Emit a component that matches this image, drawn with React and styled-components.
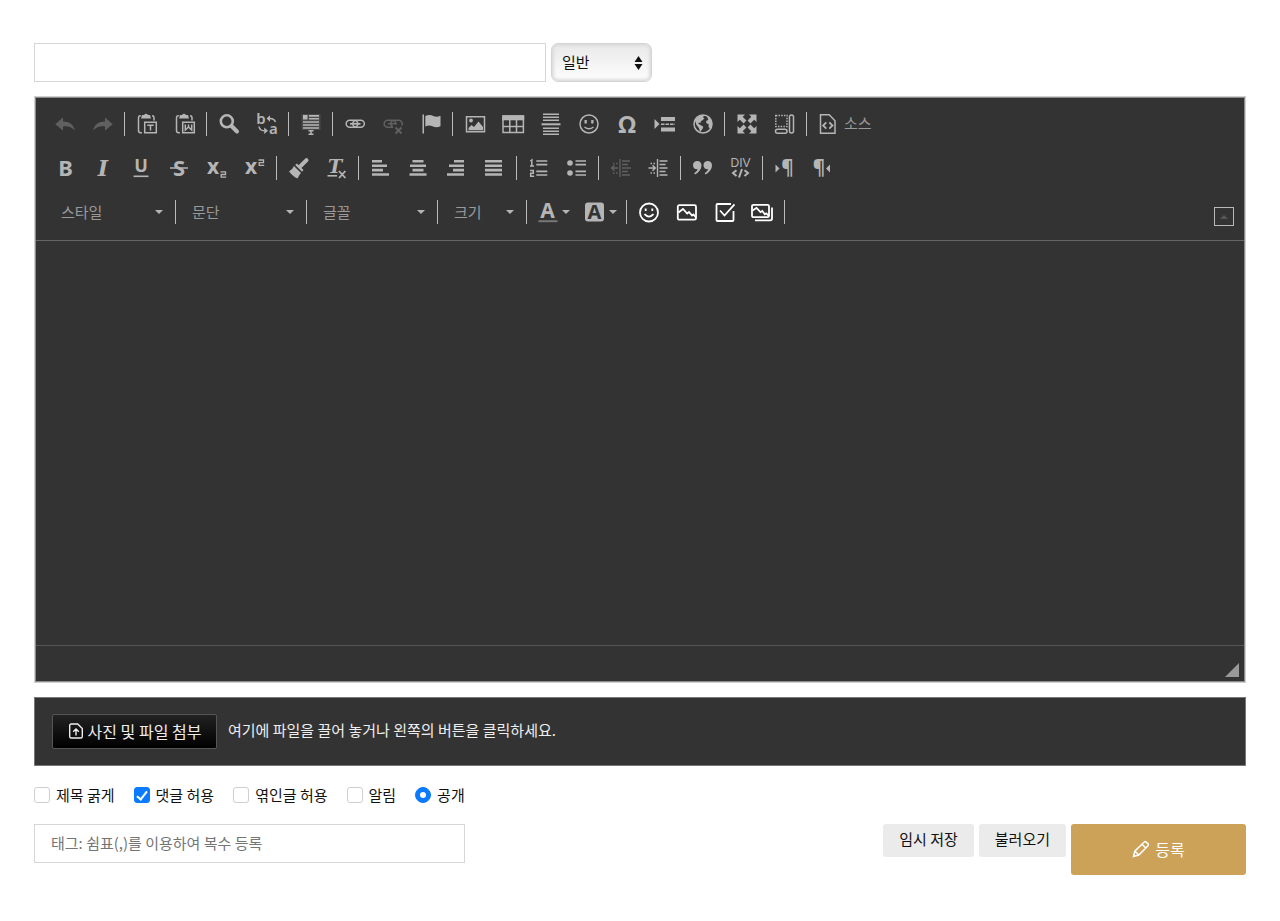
import React from "react";
import styled, { createGlobalStyle, css } from "styled-components";

const GlobalStyle = createGlobalStyle`
  *, *::before, *::after { box-sizing: border-box; }
  body {
    margin: 0;
    background: #fff;
    color: #111;
    font: 15px/24px "Noto Sans CJK KR", "Noto Sans", sans-serif;
  }
  button, input, select { font: inherit; color: inherit; margin: 0; }
`;

const line = "#d6d6d6";

const Form = styled.form`
  padding: 43px 34px 46px;
`;

const TitleRow = styled.div`
  display: flex;
  gap: 5px;
  height: 39px;
  margin-bottom: 14px;
`;

const TextInput = styled.input`
  width: ${(p) => p.$width};
  height: 39px;
  padding: 0 16px 2px;
  border: 1px solid ${line};
  background: #fff;
  outline: 0;
  &::placeholder { color: #757575; opacity: 1; }
`;

const SelectBox = styled.div`
  display: flex;
  align-items: center;
  width: 101px;
  padding-right: 8px;
  border: 1px solid #d4d4d4;
  border-radius: 7px;
  background: linear-gradient(#e9e9e9, #fdfdfd);
  box-shadow: inset 0 0 3px 2px #dcdcdc;
`;

const Select = styled.select`
  flex: 1;
  min-width: 0;
  height: 100%;
  padding: 0 0 2px 10px;
  border: 0;
  background: transparent;
  appearance: none;
  outline: 0;
`;

const Editor = styled.section`
  padding: 1px;
  border: 1px solid #d0d0d0;
  box-shadow: inset 0 0 0 1px #8c8c8c;
  background: #333;
  color: #b3b3b3;
  margin-bottom: 14px;
`;

const Toolbar = styled.div`
  display: flex;
  align-items: flex-end;
  justify-content: space-between;
  padding: 4px 10px 6px;
  border-bottom: 1px solid #666;
`;

const ToolRow = styled.div`
  display: flex;
  align-items: center;
  height: 44px;
  padding-left: ${(p) => (p.$combos ? 2 : 0)}px;
`;

const bare = css`
  padding: 0;
  border: 0;
  background: transparent;
  color: inherit;
`;

const ToolButton = styled.button`
  ${bare}
  display: flex;
  align-items: center;
  justify-content: center;
  gap: 3px;
  flex: none;
  min-width: 38px;
  height: 36px;
  padding: 0 7px;
  color: ${(p) => (p.$bright ? "#fff" : "#b5b5b5")};
  opacity: ${(p) => (p.disabled ? 0.35 : 1)};
`;

const ToolText = styled.span`
  padding-bottom: 2px;
  color: #999;
`;

const Separator = styled.span`
  width: 1px;
  height: 24px;
  margin: 0 3px 0 2px;
  background: #bbb;
`;

const Combo = styled.button`
  ${bare}
  display: flex;
  align-items: center;
  justify-content: space-between;
  width: ${(p) => p.$width}px;
  height: 36px;
  padding: 0 10px 0 13px;
  color: #999;
`;

const ColorButton = styled.button`
  ${bare}
  display: flex;
  align-items: center;
  justify-content: flex-end;
  gap: 2px;
  width: 47px;
  height: 36px;
  padding-right: 7px;
  color: #b5b5b5;
`;

const Caret = styled.span`
  border: 4px solid transparent;
  border-top-color: #b5b5b5;
  border-bottom: 0;
`;

const CollapseButton = styled.button`
  ${bare}
  display: grid;
  place-items: center;
  width: 20px;
  height: 19px;
  margin-bottom: 8px;
  border: 1px solid #b8b8b8;
  &::after {
    content: "";
    border: 4px solid transparent;
    border-bottom-color: #555;
    border-top: 0;
  }
`;

const EditArea = styled.div`
  height: 405px;
  border-bottom: 1px solid #555;
  outline: 0;
`;

const EditorFooter = styled.div`
  display: flex;
  align-items: flex-end;
  justify-content: flex-end;
  height: 35px;
  padding: 4px 5px;
`;

const ResizeGrip = styled.span`
  border: 7px solid #999;
  border-top-color: transparent;
  border-left-color: transparent;
`;

const UploadBox = styled.section`
  display: flex;
  align-items: center;
  gap: 11px;
  height: 69px;
  padding: 0 17px;
  margin-bottom: 17px;
  border: 1px solid #777;
  background: #333;
  color: #eee;
`;

const UploadHint = styled.span`
  padding-bottom: 3px;
`;

const AttachButton = styled.button`
  ${bare}
  display: flex;
  align-items: center;
  justify-content: center;
  gap: 4px;
  width: 165px;
  height: 35px;
  padding-bottom: 2px;
  border: 1px solid #555;
  border-radius: 2px;
  background: linear-gradient(#222, #000);
  font-size: 16px;
`;

const Options = styled.div`
  display: flex;
  align-items: center;
  gap: 19px;
  margin-bottom: 17px;
`;

const OptionLabel = styled.label`
  display: flex;
  align-items: center;
  gap: 6px;
`;

const Check = styled.input`
  appearance: none;
  display: grid;
  place-items: center;
  width: 16px;
  height: 16px;
  border: 1px solid #cfcfcf;
  border-radius: ${(p) => (p.type === "radio" ? "50%" : "3px")};
  background: #fff;
  &:checked { background: #0a7aff; border-color: #0a7aff; }
  &[type="checkbox"]:checked::after {
    content: "";
    width: 6px;
    height: 11px;
    border: solid #fff;
    border-width: 0 2px 2px 0;
    transform: translateY(-1px) rotate(38deg);
  }
  &[type="radio"]:checked::after {
    content: "";
    width: 6px;
    height: 6px;
    border-radius: 50%;
    background: #fff;
  }
`;

const BottomRow = styled.div`
  display: flex;
  align-items: flex-start;
  justify-content: space-between;
`;

const Actions = styled.div`
  display: flex;
  align-items: flex-start;
  gap: 5px;
`;

const GrayButton = styled.button`
  ${bare}
  height: 33px;
  padding: 0 16px 3px;
  border-radius: 3px;
  background: #ebebeb;
`;

const SubmitButton = styled.button`
  ${bare}
  display: flex;
  align-items: center;
  justify-content: center;
  gap: 5px;
  width: 175px;
  height: 51px;
  padding-bottom: 2px;
  border-radius: 3px;
  background: #cba258;
  color: #fff;
  font-size: 16px;
`;

const Glyph = styled.svg`
  display: block;
  flex: none;
  overflow: visible;
`;

const Letter = styled.text`
  fill: ${(p) => p.$fill || "currentColor"};
  stroke: none;
  text-anchor: middle;
  font: ${(p) => p.$style || "bold"} ${(p) => p.$size}px ${(p) => p.$family || '"Noto Sans"'}, sans-serif;
`;

function Svg({ children, size = 24, width = 1.5 }) {
  return (
    <Glyph
      width={size}
      height={size}
      viewBox={`0 0 ${size} ${size}`}
      fill="none"
      stroke="currentColor"
      strokeWidth={width}
      aria-hidden="true"
    >
      {children}
    </Glyph>
  );
}

const solid = { fill: "currentColor", stroke: "none" };
const serif = { $family: '"DejaVu Serif"', $style: "italic bold" };

const clipboard = (
  <>
    <path d="M5.8 3.8H5.3Q3.5 3.8 3.500 6v12.500q0 2.200 2 2.200h1.400M17 3.800q2 0 2 2.200v2.500" />
    <path {...solid} d="M7 3h2q2-2.400 4 0h2l1 3.600H6z" />
    <path d="M9.700 10.200h11.600v10.600H9.700z" />
  </>
);

const arrowUndo = "M2.3 12.3 10 5.5v4.1c6.5.2 10.5 2.8 11.8 9.2-3.2-4-6.5-4.7-11.8-4.4v4.2z";

const alignIcon = (rows) => (
  <path
    {...solid}
    d={rows.map(([x, w], i) => `M${x} ${4 + i * 4.4}h${w}v2.6h-${w}z`).join("")}
  />
);

const icons = {
  undo: <path {...solid} d={arrowUndo} />,
  redo: <path {...solid} d={arrowUndo} transform="matrix(-1 0 0 1 24 0)" />,
  pasteText: (
    <>
      {clipboard}
      <path d="M12.3 13.2h6.4M15.5 13.2v5.3" />
    </>
  ),
  pasteWord: (
    <>
      {clipboard}
      <path d="M12.3 12.5v5.5l3.2-3 3.2 3v-5.5M15.5 12.500v3" />
    </>
  ),
  find: (
    <>
      <circle cx="9.8" cy="9.3" r="6" strokeWidth="2.6" />
      <path d="m14.5 14 5.500 5.500" strokeWidth="4" strokeLinecap="round" />
    </>
  ),
  replace: (
    <>
      <Letter $size="15" $style="600" x="6" y="12">b</Letter>
      <Letter $size="15" $style="600" x="18.500" y="22">a</Letter>
      <path d="M14 6.5c3.5-.3 5.5.8 6.500 3.500M4 14.500c.5 3 2.500 4.300 5.500 4.300" />
      <path {...solid} d="M11.500 6.500 15 3.200v6.600zM13 18.800 9.200 15.500v6.600z" />
    </>
  ),
  selectAll: (
    <>
      <path fill="#4a4a4a" stroke="none" d="M2.5 2h19v16h-19z" />
      <path {...solid} d="M4 3h4.500v4.500H4zM10 3h10v1.700H10zM10 6h10v1.500H10zM4 9.200h16v1.500H4zM4 12.200h16v1.500H4zM4 15.200h16v1.500H4z" />
      <path d="M9.5 18.7h5M9.500 22.300h5M12 18.500v4" />
    </>
  ),
  link: (
    <>
      <rect x="3.200" y="8.300" width="11.500" height="7" rx="3.500" />
      <rect x="9.800" y="8.300" width="11.500" height="7" rx="3.500" />
      <path d="M7 11.800h10.500" strokeWidth="1.800" />
    </>
  ),
  unlink: (
    <>
      <path d="M12 15.300H6.700a3.500 3.500 0 0 1 0-7h4.500a3.500 3.500 0 0 1 3.500 3.500M20.800 13.500A3.500 3.500 0 0 0 17.800 8.300h-4.500A3.500 3.500 0 0 0 9.800 11.800q0 2 2 3M7 11.800h9" />
      <path d="m14.500 15.500 6 6m0-6-6 6" strokeWidth="2" />
    </>
  ),
  flag: (
    <path {...solid} d="M3.5 2.500h1.500V21.500H3.500zM6.300 4c3-1.500 5.500-1.300 8 0 2.200 1.100 4.500 1 7.200-.2v10.500c-3 1.300-5.500 1.200-8 0-2.500-1.100-4.500-1-7.200.2z" />
  ),
  image: (
    <>
      <path d="M3.500 4.700h18v15h-18z" />
      <circle {...solid} cx="8" cy="8.500" r="1.900" />
      <path {...solid} d="m5.500 18.300v-2.300l3-3 2.500 2 4.500-5.500 4.500 5.500v3.300z" />
    </>
  ),
  table: (
    <>
      <path d="M2 4h20.400v16.500H2zM2 14.500h20.400M8.800 8v12.500M15.500 8v12.500" />
      <path {...solid} d="M1.300 3.300h21.900v5H1.300z" />
    </>
  ),
  rule: (
    <>
      <path d="M4 2.300h16M4 5.300h16M4 8.300h16M4 16.200h16M4 19.200h16M4 22.200h16" strokeWidth="1.400" />
      <path d="M2.500 12.300h19" strokeWidth="2" />
    </>
  ),
  smiley: (
    <>
      <circle cx="12" cy="12" r="9" />
      <path {...solid} d="M7.500 8h2.300v3.500H7.500zM14.200 8h2.300v3.500h-2.300z" />
      <path d="M7.500 15q4.500 3.500 9 0" />
    </>
  ),
  omega: <Letter $size="24" x="12" y="20.500">Ω</Letter>,
  pageBreak: (
    <>
      <path {...solid} d="M1.500 7v10l5-5zM8 5h14v4H8zM8 15.500h14v4H8z" />
      <path d="M8 12.200h14" strokeDasharray="3.5 1" />
    </>
  ),
  globe: (
    <>
      <circle cx="12" cy="12" r="9" />
      <path {...solid} d="M4 8.500 7 4.500 11 3.300h2.200L12 5.500l1.500.8L11.800 8 10 9.200 9.300 11l-1.500-.6-.5 1.300L9.500 13l2.800 1.700-.8 2.300-2.500 3-1-3.800L5.500 13zM16 4.300l3.800 3.200 1.400 4.500-.7 3.500-1.500 1-1.500-1.500.3-2.500L15 10.800l.5-2 1.800-1z" />
    </>
  ),
  maximize: (
    <>
      <path d="m5 5 5 5M19 5l-5 5M5 19l5-5M19 19l-5-5" strokeWidth="4" />
      <path {...solid} d="M2.500 2.500H10l-7.500 7.500zM21.500 2.500H14l7.500 7.500zM2.500 21.500H10l-7.500-7.500zM21.500 21.500H14l7.500-7.500z" />
    </>
  ),
  showBlocks: (
    <>
      <path d="M2.800 3.500h11.200v11H2.800z" strokeDasharray="1.500 1.200" />
      <rect x="16.500" y="3" width="4" height="18" rx="2" />
      <rect x="2.500" y="17.200" width="11.500" height="4" rx="2" />
    </>
  ),
  source: (
    <>
      <path d="M3.500 2.700h8.700l5.800 6v12.600H3.500z" />
      <path d="m9.300 10.300-3.200 3.200 3.200 3.200M12.300 10.300l3.200 3.200-3.200 3.200" strokeWidth="1.800" />
    </>
  ),
  bold: <Letter $size="22" x="12.500" y="20">B</Letter>,
  italic: <Letter {...serif} $size="22" x="12" y="20">I</Letter>,
  underline: (
    <>
      <Letter $size="18" x="12" y="16">U</Letter>
      <path d="M4.500 20.300h15" strokeWidth="1.600" />
    </>
  ),
  strike: (
    <>
      <Letter $size="22" x="12" y="20">S</Letter>
      <path d="M3 12h18" />
    </>
  ),
  sub: (
    <>
      <Letter $size="21" x="8" y="18">x</Letter>
      <path d="M15.500 15.800h5v2.700h-4.300v2.700h5" strokeWidth="1.300" />
    </>
  ),
  sup: (
    <>
      <Letter $size="21" x="8" y="18">x</Letter>
      <path d="M15.500 4h5v2.700h-4.300v2.700h5" strokeWidth="1.300" />
    </>
  ),
  brush: (
    <>
      <path d="m19.500 4.200-6 6" strokeWidth="4" strokeLinecap="round" />
      <path {...solid} d="m10 7.500 6.500 6.500-1.500 1.800L8.200 9zM7 10l7 7q-2 2-3.500 5.500-4-1.500-8.500-7 3.500-2 5-5.500z" />
    </>
  ),
  removeFormat: (
    <>
      <Letter {...serif} $size="19" x="10" y="17">T</Letter>
      <path d="M2.500 19.800h9.500" strokeWidth="1.600" />
      <path d="m14 15 6.400 7M20.400 15l-6.400 7" strokeWidth="1.800" />
    </>
  ),
  left: alignIcon([[3, 10], [3, 15], [3, 11], [3, 17]]),
  center: alignIcon([[5.5, 11], [3, 16], [5.5, 11], [2.5, 17]]),
  right: alignIcon([[9, 10], [4, 15], [8, 11], [2, 17]]),
  justify: alignIcon([[2, 17], [2, 17], [2, 17], [2, 17]]),
  ordered: (
    <>
      <path d="M9.300 5h11M9.300 8.600h11M9.300 15.300h11M9.300 19h11" strokeWidth="1.700" />
      <path d="M3.300 5l1.500-1V10M3 10h4M3 14.500h3.300v2.800H3.700v3h3.500" strokeWidth="1.500" />
    </>
  ),
  bullets: (
    <>
      <path d="M10.500 5h10.500M10.500 8.600h10.500M10.500 15.300h10.500M10.500 19h10.500" strokeWidth="1.700" />
      <circle {...solid} cx="5" cy="7" r="2.800" />
      <circle {...solid} cx="5" cy="17" r="2.800" />
    </>
  ),
  outdent: (
    <>
      <path d="M11 3v18M13 5h8M13 8.500h6M13 12h9M13 15.500h6M13 19h8M2 12h7M5.500 9.200 2.700 12l2.800 2.800" strokeWidth="1.300" />
      <path d="M4 7.500h5M4 17h5" strokeDasharray="1.5 1.5" />
    </>
  ),
  indent: (
    <>
      <path d="M10.500 3v18M12.500 5h8M12.500 8.500h6M12.500 12h8M12.500 15.500h6M12.500 19h8M1.500 12h7M5.500 9.200 8.300 12 5.500 14.800" strokeWidth="1.400" />
      <path d="M3.500 7.500h5M3.500 17h5" strokeDasharray="1.5 1.5" />
    </>
  ),
  quote: (
    <path {...solid} d="M2 9a4.200 4.200 0 0 1 8.500.3q0 5.600-6.500 9.200l-.8-1.300q3-2 3.500-4Q2 13.400 2 9zM12.500 9a4.200 4.200 0 0 1 8.500.3q0 5.600-6.500 9.200l-.8-1.300q3-2 3.500-4Q12.500 13.400 12.500 9z" />
  ),
  div: (
    <>
      <Letter $size="12" $style="500" $family='"Liberation Sans"' x="11.500" y="10.500">DIV</Letter>
      <path d="m7.500 14.200-3.500 2.900L7.500 20M15.500 14.200l3.500 2.900-3.500 2.900M13 13l-3 8.500" strokeWidth="2" />
    </>
  ),
  ltr: (
    <>
      <path {...solid} d="M2.500 8.500v8l4-4z" />
      <Letter $size="19" x="14.500" y="17.500">¶</Letter>
    </>
  ),
  rtl: (
    <>
      <path {...solid} d="M19 8.500v8l-4-4z" />
      <Letter $size="19" x="8" y="17.500">¶</Letter>
    </>
  ),
  textColor: (
    <>
      <Letter $size="21" x="11.500" y="18">A</Letter>
      <path d="M2.500 21.200h19" stroke="#777" strokeWidth="2" />
    </>
  ),
  bgColor: (
    <>
      <rect {...solid} x="2" y="2.500" width="19" height="19" rx="3" />
      <Letter $size="20" $fill="#333" x="11.500" y="19.300">A</Letter>
    </>
  ),
  emoticon: (
    <>
      <circle cx="12" cy="12.5" r="9" strokeWidth="1.800" />
      <path {...solid} d="M7.800 8.500h1.800V11H7.800zM14.400 8.500h1.800V11h-1.800z" />
      <path d="M7.500 14.200q4.500 4.800 9 0" strokeWidth="1.800" />
    </>
  ),
  photo: (
    <>
      <rect x="2.800" y="5.200" width="18.200" height="14.500" rx="1.500" strokeWidth="1.800" />
      <path d="m3.500 12.500 4.500-3.500 4.200 4.500 1.800-1.500 3 3.500 1.500-1 2.500 3" strokeWidth="1.800" />
    </>
  ),
  todo: (
    <>
      <path d="M20.500 11v9q0 1-1 1h-15q-1 0-1-1V5q0-1 1-1H18" strokeWidth="1.800" />
      <path d="m7 10.500 4.500 5L21.500 4.300" strokeWidth="1.800" />
    </>
  ),
  gallery: (
    <>
      <rect x="1" y="4.800" width="17" height="12.400" rx="1.500" strokeWidth="1.800" />
      <path d="M4 20.300h15.200q1.800 0 1.800-1.800V7.500" strokeWidth="1.800" />
      <path d="m1.500 10.500 4-2.500 4 4.200 1.800-1.200 2.500 3.300 1.500-1 2.500 2.500" strokeWidth="1.800" />
    </>
  ),
};

const rowOne = [
  [["undo", "취소", true], ["redo", "재실행", true]],
  [["pasteText", "텍스트로 붙여넣기"], ["pasteWord", "Word에서 붙여넣기"]],
  [["find", "찾기"], ["replace", "바꾸기"]],
  [["selectAll", "모두 선택"]],
  [["link", "링크"], ["unlink", "링크 삭제", true], ["flag", "책갈피"]],
  [
    ["image", "이미지"], ["table", "표"], ["rule", "가로 줄"], ["smiley", "이모티콘"],
    ["omega", "특수 문자"], ["pageBreak", "페이지 나누기"], ["globe", "아이프레임"],
  ],
  [["maximize", "최대화"], ["showBlocks", "블록 보기"]],
];

const rowTwo = [
  [
    ["bold", "굵게"], ["italic", "기울임"], ["underline", "밑줄"],
    ["strike", "취소선"], ["sub", "아래 첨자"], ["sup", "위 첨자"],
  ],
  [["brush", "서식 복사"], ["removeFormat", "서식 지우기"]],
  [["left", "왼쪽 정렬"], ["center", "가운데 정렬"], ["right", "오른쪽 정렬"], ["justify", "양쪽 맞춤"]],
  [["ordered", "순서 있는 목록"], ["bullets", "순서 없는 목록"]],
  [["outdent", "내어쓰기", true], ["indent", "들여쓰기"]],
  [["quote", "인용"], ["div", "DIV 컨테이너"]],
  [["ltr", "왼쪽에서 오른쪽"], ["rtl", "오른쪽에서 왼쪽"]],
];

const combos = [["스타일", 125], ["문단", 125], ["글꼴", 125], ["크기", 83]];
const extras = [["emoticon", "이모티콘 삽입"], ["photo", "사진"], ["todo", "할 일"], ["gallery", "갤러리"]];

function Tool({ name, label, disabled, bright }) {
  return (
    <ToolButton type="button" aria-label={label} disabled={disabled} $bright={bright}>
      <Svg>{icons[name]}</Svg>
    </ToolButton>
  );
}

function Groups({ groups }) {
  return groups.map((group, i) => (
    <React.Fragment key={i}>
      {i > 0 && <Separator />}
      {group.map(([name, label, disabled]) => (
        <Tool key={name} name={name} label={label} disabled={disabled} />
      ))}
    </React.Fragment>
  ));
}

function Option({ label, ...input }) {
  return (
    <OptionLabel>
      <Check {...input} />
      {label}
    </OptionLabel>
  );
}

export default function App() {
  return (
    <>
      <GlobalStyle />
      <Form onSubmit={(e) => e.preventDefault()}>
        <TitleRow>
          <TextInput $width="512px" type="text" aria-label="제목" />
          <SelectBox>
            <Select aria-label="분류" defaultValue="일반">
              <option>일반</option>
            </Select>
            <Glyph width="9" height="16" viewBox="0 0 9 16" fill="#111" aria-hidden="true">
              <path d="M4.500 1 8.500 7h-8zM4.500 15l-4-6h8z" />
            </Glyph>
          </SelectBox>
        </TitleRow>

        <Editor>
          <Toolbar>
            <div role="toolbar">
              <ToolRow>
                <Groups groups={rowOne} />
                <Separator />
                <ToolButton type="button">
                  <Svg>{icons.source}</Svg>
                  <ToolText>소스</ToolText>
                </ToolButton>
              </ToolRow>
              <ToolRow>
                <Groups groups={rowTwo} />
              </ToolRow>
              <ToolRow $combos>
                {combos.map(([label, width]) => (
                  <React.Fragment key={label}>
                    <Combo type="button" $width={width}>
                      {label}
                      <Caret />
                    </Combo>
                    <Separator />
                  </React.Fragment>
                ))}
                <ColorButton type="button" aria-label="글자 색상">
                  <Svg>{icons.textColor}</Svg>
                  <Caret />
                </ColorButton>
                <ColorButton type="button" aria-label="배경 색상">
                  <Svg>{icons.bgColor}</Svg>
                  <Caret />
                </ColorButton>
                <Separator />
                {extras.map(([name, label]) => (
                  <Tool key={name} name={name} label={label} bright />
                ))}
                <Separator />
              </ToolRow>
            </div>
            <CollapseButton type="button" aria-label="툴바 줄이기" />
          </Toolbar>
          <EditArea contentEditable suppressContentEditableWarning role="textbox" aria-label="내용" />
          <EditorFooter>
            <ResizeGrip />
          </EditorFooter>
        </Editor>

        <UploadBox>
          <AttachButton type="button">
            <Svg size={16} width={1.4}>
              <path d="M1.700 2.500q0-1.500 1.500-1.500h6.500l4.600 4.500V13.500q0 1.500-1.500 1.500H3.200q-1.500 0-1.500-1.500zM8 12.500V6M5.200 8.700 8 5.900l2.800 2.800" />
            </Svg>
            사진 및 파일 첨부
          </AttachButton>
          <UploadHint>여기에 파일을 끌어 놓거나 왼쪽의 버튼을 클릭하세요.</UploadHint>
        </UploadBox>

        <Options>
          <Option type="checkbox" label="제목 굵게" />
          <Option type="checkbox" label="댓글 허용" defaultChecked />
          <Option type="checkbox" label="엮인글 허용" />
          <Option type="checkbox" label="알림" />
          <Option type="radio" name="status" label="공개" defaultChecked />
        </Options>

        <BottomRow>
          <TextInput
            $width="431px"
            type="text"
            aria-label="태그"
            placeholder="태그: 쉼표(,)를 이용하여 복수 등록"
          />
          <Actions>
            <GrayButton type="button">임시 저장</GrayButton>
            <GrayButton type="button">불러오기</GrayButton>
            <SubmitButton type="submit">
              <Svg size={18} width={1.5}>
                <path d="m1.500 16.500 1.300-5.300L12 2.200q1.200-1.200 2.400 0l1.400 1.400q1.200 1.200 0 2.400l-9 9zM10 4.200l3.800 3.800M3 11.200l3.800 3.800" />
              </Svg>
              등록
            </SubmitButton>
          </Actions>
        </BottomRow>
      </Form>
    </>
  );
}
